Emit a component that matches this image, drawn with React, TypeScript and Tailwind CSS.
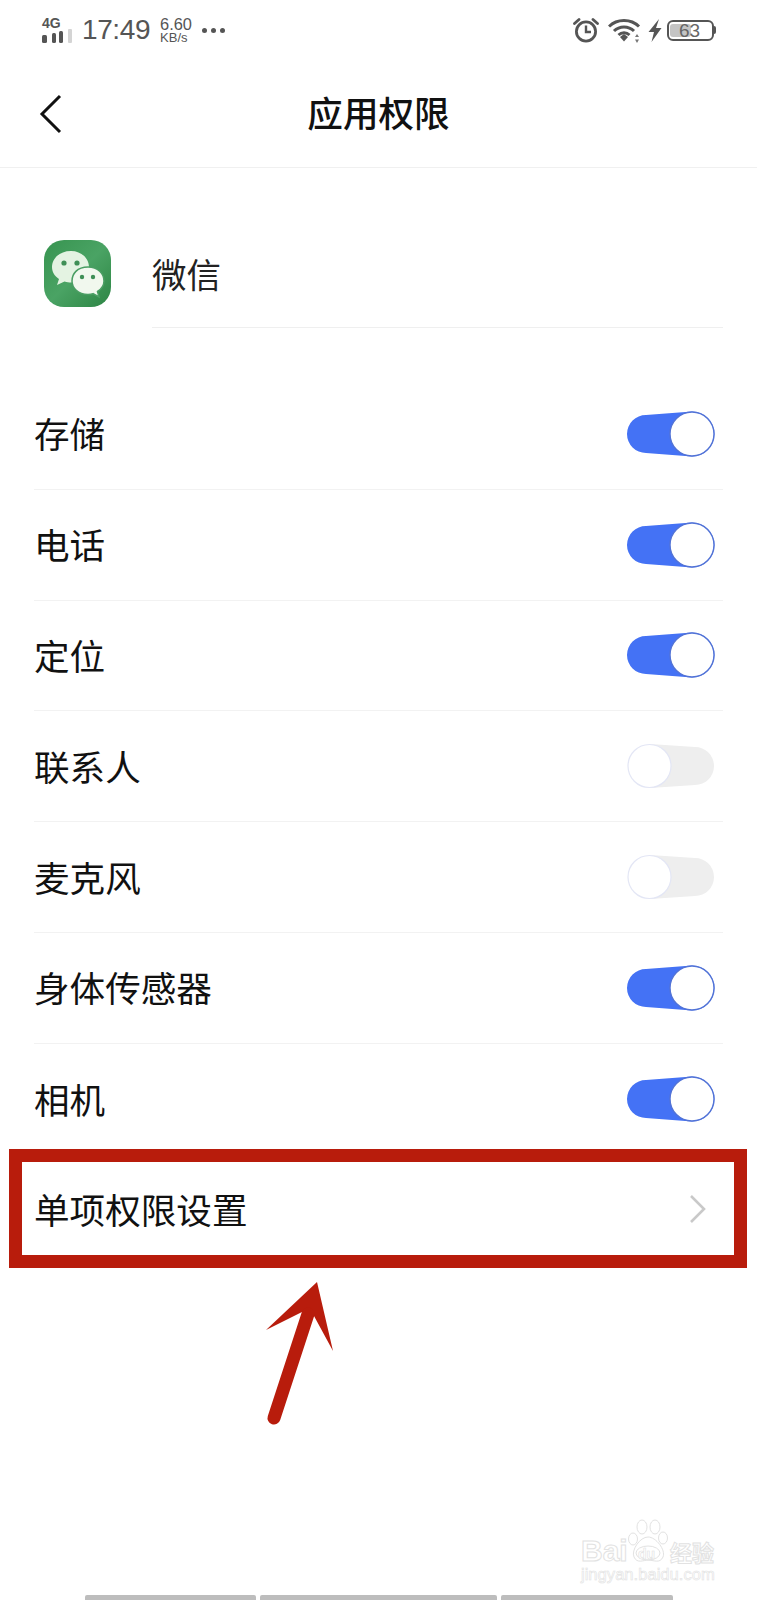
// WeChat app permissions screen
const PERMISSIONS = [
  { name: '存储', on: true },
  { name: '电话', on: true },
  { name: '定位', on: true },
  { name: '联系人', on: false },
  { name: '麦克风', on: false },
  { name: '身体传感器', on: true },
  { name: '相机', on: true },
];

const CJK = "font-['Noto_Sans_CJK_SC','Noto_Sans',sans-serif]";

function Toggle({ on }: { on: boolean }) {
  if (on) {
    return (
      <svg width="90" height="48" viewBox="0 0 90 48" className="shrink-0">
        <path d="M20 5 L66 1.500 A22.500 22.500 0 0 1 66 46.500 L20 43 A19 19 0 0 1 20 5 Z" fill="#4472f5" />
        <circle cx="66" cy="24" r="22" fill="#ffffff" stroke="#5273d6" strokeWidth="1.400" />
      </svg>
    );
  }
  return (
    <svg width="90" height="48" viewBox="0 0 90 48" className="shrink-0">
      <path d="M24 2 L69 5 A19 19 0 0 1 69 43 L24 46 Z" fill="#eeeeee" />
      <circle cx="23.500" cy="24" r="21.500" fill="#ffffff" stroke="#e3e6f5" strokeWidth="1.200" />
    </svg>
  );
}

function StatusBar() {
  return (
    <div className="h-[60px] flex items-center justify-between pl-[42px] pr-[41px] text-[#555555] font-['Liberation_Sans',sans-serif]">
      <div className="flex items-center">
        <div className="w-[30px] flex flex-col">
          <span className="text-[14px] leading-[12px] font-bold">4G</span>
          <svg width="30" height="14" viewBox="0 0 30 14">
            <rect x="0" y="6" width="5" height="8" rx="1.500" fill="#555555" />
            <rect x="10" y="4" width="4" height="10" rx="1.500" fill="#555555" />
            <rect x="17" y="2" width="4" height="12" rx="1.500" fill="#555555" />
            <rect x="26" y="0" width="4" height="14" rx="1" fill="#d4d4d4" />
          </svg>
        </div>
        <span className="ml-[10px] text-[28px] leading-[30px] tracking-[-0.4px]">17:49</span>
        <div className="ml-[10px] flex flex-col items-start">
          <span className="text-[16.400px] leading-[15px]">6.60</span>
          <span className="text-[13px] leading-[12px]">KB/s</span>
        </div>
        <div className="ml-[10px] flex gap-[4px]">
          <span className="w-[5px] h-[5px] rounded-full bg-[#555555]" />
          <span className="w-[5px] h-[5px] rounded-full bg-[#555555]" />
          <span className="w-[5px] h-[5px] rounded-full bg-[#555555]" />
        </div>
      </div>
      <div className="flex items-center">
        <svg width="26" height="26" viewBox="0 0 26 26" fill="none" stroke="#555555">
          <circle cx="13" cy="14.500" r="9.600" strokeWidth="2.800" />
          <path d="M13 8.500V15H18" strokeWidth="2.400" />
          <path d="M1.500 6.500 L6 2.500 M24.500 6.500 L20 2.500" strokeWidth="2.800" strokeLinecap="round" />
        </svg>
        <svg width="34" height="26" viewBox="0 0 34 26" fill="none" stroke="#555555" className="ml-[9px]">
          <path d="M1 9.500 C9 1.500 23 1.500 31 9.500" strokeWidth="3" />
          <path d="M6 14 C11.500 8.500 20.500 8.500 26 14" strokeWidth="3" />
          <path d="M10.500 18 C13.500 15 18.500 15 21.500 18" strokeWidth="2.800" />
          <path d="M12 20 L16 17 L20 20 L16 24.500 Z" fill="#555555" stroke="none" />
          <path d="M29 17 L31 20 H27 Z M29 26 L31 22.500 H27 Z" fill="#777777" stroke="none" />
        </svg>
        <svg width="16" height="26" viewBox="0 0 16 26" className="ml-[5px]">
          <path d="M12 2 L1.500 15 H7 L4.500 25 L14.500 11 H9 Z" fill="#555555" />
        </svg>
        <div className="ml-[4px] relative w-[47px] h-[21px] rounded-[6px] border-2 border-[#555555] flex items-center justify-center">
          <div className="absolute left-[1px] top-[2px] bottom-[2px] w-[21px] rounded-[3px] bg-[#c4c4c4]" />
          <span className="relative left-[-1px] text-[19px] leading-[17px] text-[#666666]">63</span>
        </div>
        <div className="w-[2px] h-[8px] bg-[#555555] rounded-r-[2px]" />
      </div>
    </div>
  );
}

function WeChatIcon() {
  return (
    <div className="w-[67px] h-[67px] shrink-0 rounded-[20px] bg-gradient-to-br from-[#379450] via-[#4aa364] to-[#2c8544] flex items-center justify-center">
      <svg width="67" height="67" viewBox="0 0 67 67">
        <path d="M27 11 C15 11 8 19 8 27 C8 32 10.500 36 15 39 L13 45 L20.500 41.500 C23 42.300 25 42.600 27 42.600 C39 42.600 45 34.500 45 27 C45 19 38 11 27 11 Z" fill="#e4f3e2" />
        <circle cx="20" cy="23" r="2.600" fill="#3f8f56" />
        <circle cx="33" cy="23" r="2.600" fill="#3f8f56" />
        <path d="M44 27 C33 27 28 34 28 41 C28 48 34 54.500 44 54.500 C46 54.500 47.500 54.300 49 53.700 L55 57 L53.500 51.500 C57.500 49 60 45.500 60 41 C60 33.500 54 27 44 27 Z" fill="#f1f8ee" stroke="#4a9e63" strokeWidth="1.500" />
        <circle cx="38" cy="37" r="2.200" fill="#3f8f56" />
        <circle cx="49" cy="37" r="2.200" fill="#3f8f56" />
      </svg>
    </div>
  );
}

function Watermark() {
  return (
    <div className="absolute left-[581px] top-[1518px] w-[140px] h-[66px] text-white font-['Liberation_Sans',sans-serif] [-webkit-text-stroke:1px_#e2e2e2]">
      <span className="absolute left-0 top-[18px] text-[30px] leading-[30px] font-bold">Bai</span>
      <svg width="44" height="48" viewBox="0 0 44 48" fill="none" stroke="#e2e2e2" strokeWidth="1" className="absolute left-[46px] top-0">
        <ellipse cx="6" cy="21" rx="4.500" ry="6" />
        <ellipse cx="15" cy="9" rx="5" ry="7" />
        <ellipse cx="28" cy="9" rx="5" ry="7" />
        <ellipse cx="36" cy="20" rx="4.500" ry="6" />
        <path d="M21 19 C13 19 4 32 7 39 C10 46 17 42 21 42 C26 42 33 46 36 39 C39 32 29 19 21 19 Z" />
        <ellipse cx="21" cy="35" rx="12" ry="7" />
      </svg>
      <span className="absolute left-[57px] top-[29px] text-[14px] leading-[14px] font-bold [-webkit-text-stroke:0.6px_#e2e2e2]">du</span>
      <span className={`absolute left-[89px] top-[21px] text-[22px] leading-[24px] font-bold ${CJK}`}>经验</span>
      <span className="absolute left-0 top-[48px] whitespace-nowrap text-[16.600px] leading-[18px] [-webkit-text-stroke:0.6px_#e2e2e2]">jingyan.baidu.com</span>
    </div>
  );
}

export default function App() {
  return (
    <div className={`relative w-[757px] h-[1600px] overflow-hidden bg-white text-[#111111] ${CJK}`}>
      <StatusBar />

      {/* Header */}
      <div className="relative h-[108px] flex items-center justify-center border-b border-[#f0f0f0]">
        <svg width="24" height="40" viewBox="0 0 24 40" fill="none" stroke="#111111" strokeWidth="3" className="absolute left-[39px] top-[34px]">
          <path d="M21 2 L3 20 L21 38" />
        </svg>
        <h1 className="text-[35.600px] leading-[40px] font-medium mt-[-3px]">应用权限</h1>
      </div>

      {/* App */}
      <div className="h-[160px] pt-[50px] flex items-center pl-[44px] pr-[34px]">
        <WeChatIcon />
        <div className="ml-[41px] flex-1 h-full flex items-center border-b border-[#efefef]">
          <span className="text-[34.500px] leading-[40px] text-[#222222]">微信</span>
        </div>
      </div>

      {/* Permissions */}
      <div className="mt-[51px] px-[34px]">
        {PERMISSIONS.map((item, i) => (
          <div
            key={item.name}
            className={`h-[110.800px] flex items-center justify-between pr-[7px] ${i < PERMISSIONS.length - 1 ? 'border-b border-[#f2f2f2]' : ''}`}
          >
            <span className="text-[35.600px] leading-[40px] mb-[1px]">{item.name}</span>
            <Toggle on={item.on} />
          </div>
        ))}
        <div className="h-[111px] flex items-center justify-between pr-[16px]">
          <span className="text-[35.600px] leading-[40px] mb-[3px]">单项权限设置</span>
          <svg width="18" height="28" viewBox="0 0 18 28" fill="none" stroke="#c9c9c9" strokeWidth="2.600" className="mb-[2px]">
            <path d="M2 1 L15 14 L2 27" />
          </svg>
        </div>
      </div>

      {/* Red annotation */}
      <div className="absolute left-[9px] top-[1149px] w-[738px] h-[119px] border-[13px] border-[#b81c0c]" />
      <svg width="100" height="170" viewBox="0 0 100 170" className="absolute left-[250px] top-[1270px]">
        <path d="M67 12 L83 81 L64 46 L52 42 L16 60 Z" fill="#b81c0c" />
        <path d="M58 44 L24 148" stroke="#b81c0c" strokeWidth="13" strokeLinecap="round" fill="none" />
      </svg>

      <Watermark />

      {/* Bottom bars */}
      <div className="absolute left-[85px] bottom-0 flex gap-[4px]">
        <div className="w-[171px] h-[5px] rounded-t-[2px] bg-[#bdbdbd]" />
        <div className="w-[237px] h-[5px] rounded-t-[2px] bg-[#bdbdbd]" />
        <div className="w-[172px] h-[5px] rounded-t-[2px] bg-[#bdbdbd]" />
      </div>
    </div>
  );
}
